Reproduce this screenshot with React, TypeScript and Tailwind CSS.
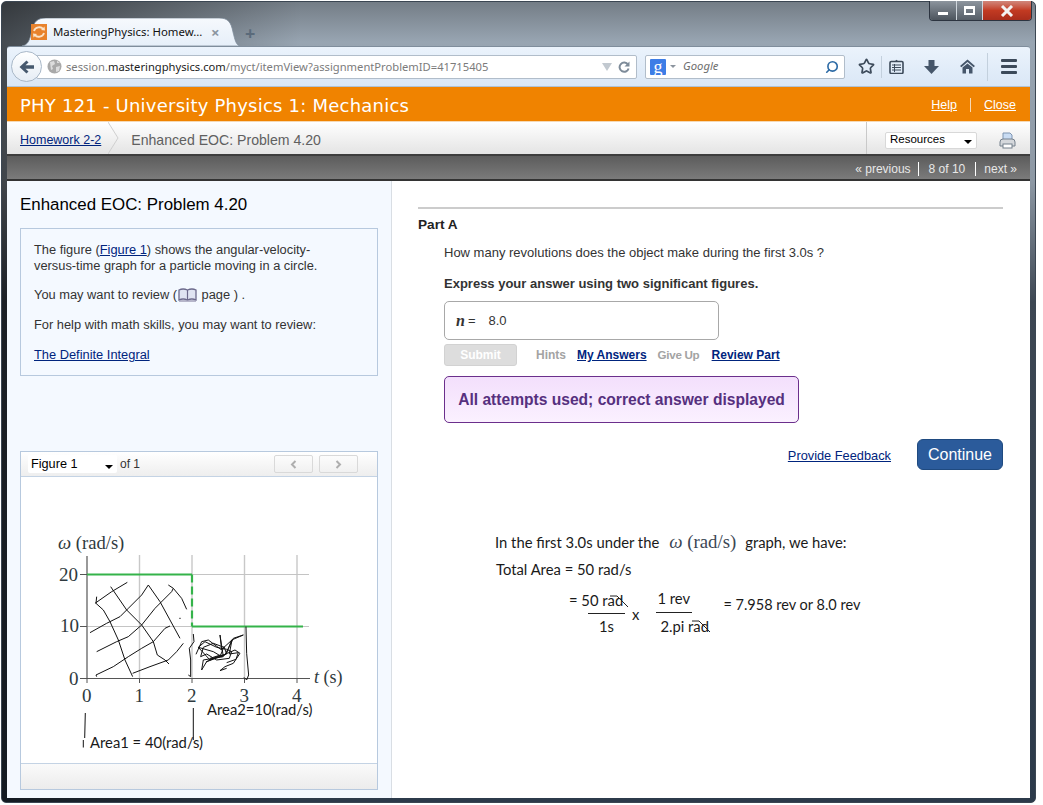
import { Star, Search } from "lucide-react";

const arial = "font-['Liberation_Sans',Arial,sans-serif]";

function TabShape() {
  return (
    <svg className="absolute inset-0" width="218" height="28" viewBox="0 0 218 28">
      <defs>
        <linearGradient id="tabfill" x1="0" y1="0" x2="0" y2="1">
          <stop offset="0" stopColor="#f6f9fd" />
          <stop offset="1" stopColor="#e6eff9" />
        </linearGradient>
      </defs>
      <path
        d="M0 28 C6 27 8 22 10 12 C12 4 15 0 24 0 L197 0 C206 0 209 4 211 14 C213 22 214 27 218 28 Z"
        fill="url(#tabfill)"
        stroke="#7f8d9c"
        strokeWidth="0.8"
      />
    </svg>
  );
}

function Favicon() {
  return (
    <svg width="16" height="16" viewBox="0 0 16 16">
      <rect width="16" height="16" fill="#e8822c" />
      <path d="M3 7 C4 3 10 2 12 5" fill="none" stroke="#fbe3c8" strokeWidth="1.8" />
      <path d="M13 9 C12 13 6 14 4 11" fill="none" stroke="#fbe3c8" strokeWidth="1.8" />
      <path d="M10 6 L14 6.5 L13.5 2.5 Z M6 10 L2 9.5 L2.5 13.5 Z" fill="#fbe3c8" />
    </svg>
  );
}

function WindowControls() {
  return (
    <div className="flex h-[20px] w-[103px] overflow-hidden rounded-b-[4px] border border-t-0 border-[#2c3440]">
      <div className="flex w-[27px] items-center justify-center border-r border-[#cfd6dd] bg-gradient-to-b from-[#8d959e] to-[#4d555e]">
        <div className="mt-[5px] h-[3px] w-[10px] bg-white" />
      </div>
      <div className="flex w-[26px] items-center justify-center border-r border-[#cfd6dd] bg-gradient-to-b from-[#8d959e] to-[#565e67]">
        <div className="h-[9px] w-[11px] border-2 border-t-[3px] border-white" />
      </div>
      <div className="flex flex-1 items-center justify-center bg-gradient-to-b from-[#d0867a] via-[#c23a22] to-[#a92d1c]">
        <svg width="14" height="12" viewBox="0 0 14 12">
          <path d="M2 1 L12 11 M12 1 L2 11" stroke="#f3f3f3" strokeWidth="3" />
        </svg>
      </div>
    </div>
  );
}

function BackButton() {
  return (
    <div className="relative z-10 flex h-[31px] w-[31px] shrink-0 items-center justify-center rounded-full border border-[#a9b8c8] bg-gradient-to-b from-white to-[#e6edf5]">
      <svg width="16" height="14" viewBox="0 0 16 14">
        <path d="M7.5 0.5 L0.5 7 L7.5 13.5 L9.5 11.5 L6.5 8.8 L15 8.8 L15 5.2 L6.5 5.2 L9.5 2.5 Z" fill="#47596e" />
      </svg>
    </div>
  );
}

function Globe() {
  return (
    <svg width="15" height="15" viewBox="0 0 15 15">
      <circle cx="7.5" cy="7.5" r="7" fill="#a9a9a9" />
      <path d="M3 3 L7 2 L8 5 L5 7 L6 10 L4 11 Z M9 8 L13 7 L12 12 L9 13 Z M10 1.5 L13 4 L10 4 Z" fill="#dcdcdc" />
    </svg>
  );
}

function ReloadIcon() {
  return (
    <svg width="12" height="12" viewBox="0 0 12 12">
      <path d="M10 3.6 A4.6 4.6 0 1 0 10.6 7.5" fill="none" stroke="#7d8b99" strokeWidth="2" />
      <path d="M11.5 0.5 L11.5 5.5 L6.5 5.5 Z" fill="#7d8b99" />
    </svg>
  );
}

function Clipboard() {
  return (
    <svg width="15" height="15" viewBox="0 0 15 15">
      <rect x="1" y="2.5" width="13" height="12" rx="1.2" fill="none" stroke="#3c4a5a" strokeWidth="1.6" />
      <path d="M5 3 L7.5 0.8 L10 3 Z" fill="#3c4a5a" />
      <path d="M3 6 H12 M3 8.5 H12 M3 11 H12" stroke="#3c4a5a" strokeWidth="1.2" />
      <path d="M5.5 5 V13" stroke="#3c4a5a" strokeWidth="1" />
    </svg>
  );
}

function DownloadArrow() {
  return (
    <svg width="15" height="14" viewBox="0 0 15 14">
      <path d="M4.5 0 H10.5 V6 H15 L7.5 14 L0 6 H4.5 Z" fill="#46566a" />
    </svg>
  );
}

function HomeIcon() {
  return (
    <svg width="15" height="15" viewBox="0 0 15 15">
      <path d="M7.5 0.5 L15 7 L13.6 8.2 L7.5 3 L1.4 8.2 L0 7 Z" fill="#46566a" />
      <path d="M7.5 4.4 L12.5 8.6 V14.5 H9 V10 H6 V14.5 H2.5 V8.6 Z" fill="#46566a" />
    </svg>
  );
}

function Hamburger() {
  return (
    <div className="flex w-[16px] flex-col gap-[3px]">
      <div className="h-[3px] rounded-[1px] bg-[#3c4a5a]" />
      <div className="h-[3px] rounded-[1px] bg-[#3c4a5a]" />
      <div className="h-[3px] rounded-[1px] bg-[#3c4a5a]" />
    </div>
  );
}

function Toolbar() {
  return (
    <div className="flex h-[40px] items-center rounded-t-[3px] border-t border-[#7f8d9c] bg-gradient-to-b from-[#ebf3fc] to-[#dae7f6] pl-[4px]">
      <BackButton />
      <div className="-ml-[6px] flex h-[24px] w-[601px] items-center rounded-[2px] border border-[#b1bdca] bg-white pl-[10px] pr-[6px]">
        <Globe />
        <span className="ml-[4px] font-['Noto_Sans',sans-serif] text-[11.2px] leading-none text-[#7b7b7b]">
          session.<span className="text-[#1c1c1c]">masteringphysics.com</span>/myct/itemView?assignmentProblemID=41715405
        </span>
        <div className="ml-auto flex items-center gap-[6px]">
          <div className="h-0 w-0 border-x-[5px] border-t-[8px] border-x-transparent border-t-[#c2c9d0]" />
          <ReloadIcon />
        </div>
      </div>
      <div className="ml-[8px] flex h-[24px] w-[200px] items-center rounded-[2px] border border-[#b1bdca] bg-white pl-[4px] pr-[5px]">
        <div className="flex h-[16px] w-[16px] items-center justify-center rounded-[1px] bg-[#3d7de6] font-['Liberation_Serif',serif] text-[18px] leading-none text-white">
          g
        </div>
        <div className="ml-[4px] h-0 w-0 border-x-[3px] border-t-[3px] border-x-transparent border-t-[#8b949e]" />
        <span className="ml-[7px] font-['Noto_Sans',sans-serif] text-[11.3px] italic text-[#6e6e6e]">Google</span>
        <Search className="ml-auto -scale-x-100 text-[#2c6aa5]" size={14} strokeWidth={2.8} />
      </div>
      <Star className="ml-[13px] text-[#3c4a5a]" size={17} strokeWidth={2.4} />
      <div className="ml-[6px] h-[22px] w-px bg-[#c3d0dd]" />
      <div className="ml-[7px]">
        <Clipboard />
      </div>
      <div className="ml-[20px]">
        <DownloadArrow />
      </div>
      <div className="ml-[21px]">
        <HomeIcon />
      </div>
      <div className="ml-[12px] h-[28px] w-px bg-[#c3d0dd]" />
      <div className="ml-[13px]">
        <Hamburger />
      </div>
    </div>
  );
}

function Printer() {
  return (
    <svg width="17" height="17" viewBox="0 0 17 17">
      <path d="M4 1 H11 L13 3 V9 H4 Z" fill="#c9dcf3" stroke="#7e95b2" />
      <path d="M1 10 Q1 7 4 7 H13 Q16 7 16 10 V14 H1 Z" fill="#d5d8dc" stroke="#75808c" />
      <rect x="4" y="12" width="9" height="4" fill="#fff" stroke="#75808c" />
    </svg>
  );
}

function Crumbs() {
  return (
    <div className={`flex h-[33px] items-stretch border-t border-[#f6d9b5] bg-gradient-to-b from-white to-[#e4e4e4] ${arial}`}>
      <div className="flex items-center pl-[13px] pt-[5px]">
        <a className="text-[12.5px] text-[#00247d] underline">Homework 2-2</a>
      </div>
      <svg className="ml-[7px]" width="12" height="32" viewBox="0 0 12 32">
        <path d="M0 0 L10 16 L0 32" fill="none" stroke="#cfcfcf" />
      </svg>
      <div className="ml-[11px] flex flex-1 items-center pt-[5px] text-[14.1px] text-[#606060]">Enhanced EOC: Problem 4.20</div>
      <div className="flex w-[164px] items-center border-l border-[#c9c9c9] pl-[18px] pt-[4px]">
        <div className="flex h-[17px] w-[92px] items-center rounded-[2px] border border-[#d8d8d8] bg-white pl-[4px] pr-[4px] text-[11.5px] text-black">
          Resources
          <div className="ml-auto mt-[4px] h-0 w-0 border-x-[4px] border-t-[4px] border-x-transparent border-t-black" />
        </div>
        <div className="ml-[22px]">
          <Printer />
        </div>
      </div>
    </div>
  );
}

function PagerBar() {
  return (
    <div
      className={`flex h-[27px] items-center justify-end border-y-2 border-t-[#3d3d3d] border-b-[#333333] bg-gradient-to-b from-[#5c5c5c] to-[#7b7b7b] pr-[13px] pt-[2px] text-[12px] text-[#e8e8e8] ${arial}`}
    >
      <span>« previous</span>
      <div className="ml-[7px] mr-[10px] h-[14px] w-px bg-white" />
      <span>8 of 10</span>
      <div className="ml-[10px] mr-[8px] h-[14px] w-px bg-white" />
      <span>next »</span>
    </div>
  );
}

function BookIcon() {
  return (
    <svg className="mx-[1px] inline-block align-[-3px]" width="19" height="14" viewBox="0 0 19 14">
      <path d="M1 2 Q5 0 9.5 2 Q14 0 18 2 V12 Q14 10 9.5 12 Q5 10 1 12 Z" fill="#dfe4f2" stroke="#6c6a8c" strokeWidth="1.3" />
      <path d="M9.5 2 V12" stroke="#6c6a8c" strokeWidth="1.2" />
      <path d="M1 13 H18" stroke="#8b88a6" strokeWidth="1.2" />
    </svg>
  );
}

function ProblemBox() {
  return (
    <div className="mt-[14px] h-[148px] border border-[#b7c9de] px-[13px] pt-[13px] text-[12.85px] leading-[16px] text-[#333333]">
      <p>
        The figure (<a className="text-[#00247d] underline">Figure 1</a>) shows the angular-velocity-
        <br />
        versus-time graph for a particle moving in a circle.
      </p>
      <p className="mt-[13px]">
        You may want to review (<BookIcon /> page ) .
      </p>
      <p className="mt-[14px]">For help with math skills, you may want to review:</p>
      <p className="mt-[14px]">
        <a className="text-[#00247d] underline">The Definite Integral</a>
      </p>
    </div>
  );
}

// hand drawn marks, traced at 3x and scaled down
const scribbles = [
  "M75 130 L125 95 L172 67",
  "M122 80 L170 150 L215 195 L250 245 L262 285 L285 300 L297 312",
  "M80 110 L78 130 L100 150 L120 185 L145 240 L165 300 L188 350",
  "M60 218 L110 190 L150 170 L175 145 L215 105 L235 75",
  "M235 75 L270 125 L300 180 L330 235",
  "M80 275 L140 245 L175 230 L215 195 L255 145 L305 95 L310 85 L295 75",
  "M310 85 L335 115 L350 148",
  "M80 350 L78 345 L130 320 L175 290 L215 265 L250 245 L285 205 L300 198",
  "M188 340 L240 320 L295 300 L320 275 L340 250",
  "M370 222 L372 245 L358 265 L362 300 L362 350 L355 345",
  "M528 200 L530 280 L536 345 L530 360 L522 352",
  "M378 283 L395 245 L415 240 L455 270 L450 225 L460 290 L400 300 L395 330 L410 305 L465 285 L490 235 L520 225 L485 240 L470 280 L455 290 L430 275 L385 262 L420 300 L460 285 L495 270 L510 280 L490 310 L465 320 L450 332 L470 325",
  "M385 262 L405 245 L440 262 L470 268 L485 275 L478 295 L440 300 L410 282 L392 290 L400 262 L430 250 L462 262 L486 240 L478 282 L505 278 L498 298 L470 308",
  "M408 306 L440 290 L470 282 L462 260 L452 285 L420 295",
];

function Graph() {
  const serif = "'Liberation Serif', serif";
  const xs = [87, 139.5, 192, 244.5, 297];
  return (
    <svg className="block" width="356" height="286" viewBox="21 477 356 286">
      {/* grid */}
      {xs.slice(1).map((x) => (
        <line key={x} x1={x} y1="555" x2={x} y2="678" stroke="#c8c8c8" strokeWidth="1.4" />
      ))}
      <line x1="87" y1="574.5" x2="309" y2="574.5" stroke="#c4c4c4" />
      <line x1="87" y1="626.5" x2="309" y2="626.5" stroke="#c4c4c4" />
      {/* axes */}
      <line x1="87" y1="556" x2="87" y2="679" stroke="#808080" strokeWidth="1.6" />
      <line x1="80" y1="678.5" x2="310" y2="678.5" stroke="#555555" strokeWidth="1.2" />
      <line x1="80" y1="574.5" x2="87" y2="574.5" stroke="#555555" />
      <line x1="80" y1="626.5" x2="87" y2="626.5" stroke="#555555" />
      {xs.map((x) => (
        <line key={x} x1={x} y1="678" x2={x} y2="683" stroke="#555555" />
      ))}
      {/* data */}
      <path d="M87 574.5 H192" stroke="#35b34a" strokeWidth="2" fill="none" />
      <path d="M192 574.5 V626.5" stroke="#35b34a" strokeWidth="2.2" strokeDasharray="8 4" fill="none" />
      <path d="M192 626.5 H303" stroke="#35b34a" strokeWidth="2" fill="none" />
      {/* labels */}
      <g fontFamily={serif} fontSize="19" fill="#2f3a40">
        <text x="58" y="549" fontSize="18.6">
          <tspan fontStyle="italic">ω</tspan> (rad/s)
        </text>
        <text x="59" y="581">20</text>
        <text x="60" y="632">10</text>
        <text x="69" y="685">0</text>
        <text x="82" y="702">0</text>
        <text x="134.5" y="702">1</text>
        <text x="187" y="702">2</text>
        <text x="239.5" y="702">3</text>
        <text x="292" y="702">4</text>
        <text x="314" y="683" fontSize="18">
          <tspan fontStyle="italic">t</tspan> (s)
        </text>
      </g>
      <g fontFamily="Lato, sans-serif" fontSize="14.8" fill="#1a1a1a">
        <text x="207" y="715">Area2=10(rad/s)</text>
        <text x="90" y="748">Area1 = 40(rad/s)</text>
      </g>
      {/* scribbles */}
      <g transform="translate(70 560) scale(0.3333)" fill="none" stroke="#111111" strokeWidth="3" strokeLinejoin="round">
        {scribbles.map((d) => (
          <path key={d} d={d} />
        ))}
        <path d="M328 175 h4" />
      </g>
      <path d="M85.3 713 L84.7 738 M83.3 740 V747.5 M193.3 708 V740" stroke="#111111" fill="none" />
    </svg>
  );
}

function FigurePanel() {
  return (
    <div className="mt-[75px] h-[339px] border border-[#b7c9de] bg-white text-[12.7px]">
      <div className="flex h-[25px] items-center border-b border-[#c4d3e4] bg-gradient-to-b from-white to-[#eeeeee] pl-[7px] pr-[19px] text-[#333333]">
        <div className="flex h-[18px] w-[89px] shrink-0 items-center rounded-[2px] bg-white pl-[3px] pr-[4px] pt-[1px] text-black">
          Figure 1
          <div className="ml-auto mt-[4px] h-0 w-0 border-x-[4px] border-t-[4px] border-x-transparent border-t-black" />
        </div>
        <span className="ml-[3px] whitespace-nowrap text-[12px]">of 1</span>
        <div className="ml-auto flex h-[18px] w-[39px] items-center justify-center rounded-[2px] border border-[#d9d9d9] text-[#aeaeae]">
          <svg width="7" height="9" viewBox="0 0 7 9">
            <path d="M5.5 1 L2 4.5 L5.5 8" fill="none" stroke="#aeaeae" strokeWidth="2" />
          </svg>
        </div>
        <div className="ml-[6px] flex h-[18px] w-[39px] items-center justify-center rounded-[2px] border border-[#d9d9d9]">
          <svg width="7" height="9" viewBox="0 0 7 9">
            <path d="M1.5 1 L5 4.5 L1.5 8" fill="none" stroke="#aeaeae" strokeWidth="2" />
          </svg>
        </div>
      </div>
      <Graph />
      <div className="h-[26px] border-t border-[#c4d3e4] bg-gradient-to-b from-[#fafafa] to-[#ececec]" />
    </div>
  );
}

function LeftPanel() {
  return (
    <div className="w-[385px] shrink-0 border-r border-[#d9dee4] bg-[#f4f9ff] px-[13px] pt-[15px]">
      <h1 className="text-[16.9px] leading-[18px] text-black">Enhanced EOC: Problem 4.20</h1>
      <ProblemBox />
      <FigurePanel />
    </div>
  );
}

function Question() {
  return (
    <div className="ml-[26px]">
      <p className="mt-[12px] text-[13px] leading-[16px] text-[#333333]">
        How many revolutions does the object make during the first 3.0s ?
      </p>
      <p className="mt-[15px] text-[13px] font-bold leading-[16px] text-[#333333]">
        Express your answer using two significant figures.
      </p>
      <div className="mt-[9px] flex h-[39px] w-[275px] items-center rounded-[5px] border border-[#a8a8a8] pl-[11px] text-[13px] text-[#333333]">
        <span className="font-['Liberation_Serif',serif] text-[16px] font-bold italic">n</span>
        <span className="ml-[3px]">=</span>
        <span className="ml-[13px]">8.0</span>
      </div>
      <div className="mt-[4px] flex h-[22px] items-center text-[12px] font-bold">
        <div className="flex h-[22px] w-[73px] items-center justify-center rounded-[3px] border border-[#d2d2d2] bg-[#dddddd] text-white">
          Submit
        </div>
        <span className="ml-[19px] text-[#a3a3a3]">Hints</span>
        <a className="ml-[11px] text-[#00247d] underline">My Answers</a>
        <span className="ml-[11px] w-[42px] whitespace-nowrap text-[11.6px] tracking-[-0.3px] text-[#a3a3a3]">Give Up</span>
        <a className="ml-[12px] text-[#00247d] underline">Review Part</a>
      </div>
      <div className="mt-[10px] flex h-[47px] w-[355px] items-center justify-center rounded-[5px] border border-[#6b2f8c] bg-gradient-to-b from-[#f3dffc] to-[#fbf1ff] text-[15.6px] font-bold text-[#56307e]">
        All attempts used; correct answer displayed
      </div>
    </div>
  );
}

function Strike({ className }: { className: string }) {
  return (
    <svg className={`absolute ${className}`} width="20" height="14" viewBox="0 0 20 14">
      <path d="M1 2 L8 2 L12 6 L19 13" fill="none" stroke="#222222" />
    </svg>
  );
}

function Working() {
  return (
    <div className="ml-[77px] font-['Lato',sans-serif] text-[14.8px] leading-[20px] text-[#1a1a1a]">
      <div className="mt-[62px] flex items-center whitespace-nowrap">
        <span>In the first 3.0s under the</span>
        <span className="ml-[10px] mr-[9px] font-['Liberation_Serif',serif] text-[18.8px] text-[#3b4654]">
          <i>ω</i> (rad/s)
        </span>
        <span>graph, we have:</span>
      </div>
      <div className="ml-[1px] mt-[7px]">Total Area = 50 rad/s</div>
      <div className="mt-[11px] flex">
        <div className="ml-[74px] w-[57px]">
          <div className="relative h-[20px] whitespace-nowrap">
            = 50 rad
            <Strike className="left-[40px] top-[4px]" />
          </div>
          <div className="ml-[19px] mt-[3px] h-px w-[37px] bg-[#222222]" />
          <div className="ml-[30px] mt-[2px]">1s</div>
        </div>
        <div className="ml-[6px] mt-[14px]">x</div>
        <div className="ml-[17px] w-[60px]">
          <div className="ml-[1px] h-[20px] -translate-y-[2px]">1 rev</div>
          <div className="mt-[2px] h-px w-[36px] bg-[#222222]" />
          <div className="relative ml-[4px] mt-[3px] h-[20px] whitespace-nowrap">
            2.pi rad
            <Strike className="left-[31px] top-[3px]" />
          </div>
        </div>
        <div className="ml-[7px] mt-[5px] whitespace-nowrap text-[14.5px]">= 7.958 rev or 8.0 rev</div>
      </div>
    </div>
  );
}

function RightPanel() {
  return (
    <div className="flex-1 bg-white pl-[26px] pr-[27px] pt-[26px]">
      <div className="h-[2px] bg-[#cccccc]" />
      <h2 className="mt-[8px] text-[13.6px] font-bold leading-[16px] text-[#222222]">Part A</h2>
      <Question />
      <div className="mt-[16px] flex h-[31px] items-center justify-end">
        <a className="mt-[2px] text-[12.8px] text-[#00247d] underline">Provide Feedback</a>
        <button className="ml-[26px] h-[31px] w-[86px] rounded-[6px] border border-[#1f4a80] bg-[#2b5b9b] text-[16px] text-white">
          Continue
        </button>
      </div>
      <Working />
    </div>
  );
}

export default function App() {
  return (
    <div className="h-[805px] w-[1043px] overflow-hidden bg-white">
      <div className="ml-px mt-px h-[802px] w-[1035px] rounded-[5px] border border-[#3b4652] bg-[linear-gradient(90deg,rgba(0,0,0,0.55)_0px,rgba(0,0,0,0)_300px),linear-gradient(180deg,#747d86_0px,#98a5b2_40px,#8d98a4_180px,#3d4753_300px,#2c3a4a_800px)] px-[5px]">
        <div className="flex h-[44px] items-start justify-between">
          <div className="ml-[15px] mt-[16px] flex items-start">
            <div className="relative flex h-[28px] w-[218px] items-center pl-[9px] font-['Noto_Sans',sans-serif] text-[11.4px] text-[#111111]">
              <TabShape />
              <div className="relative">
                <Favicon />
              </div>
              <span className="relative ml-[6px] w-[148px] whitespace-nowrap">MasteringPhysics: Homew...</span>
              <span className="relative ml-[10px] text-[15px] font-bold leading-none text-[#8b95a0]">×</span>
            </div>
            <span className="ml-[5px] mt-[1px] text-[18px] font-bold leading-[28px] text-[#5a6a7a]">+</span>
          </div>
          <div className="-mr-[2px] -mt-px">
            <WindowControls />
          </div>
        </div>
        <Toolbar />
        <div className={arial}>
          <div className="flex h-[35px] items-center justify-between border-t border-[#b0c3d6] bg-[#f08300] pl-[13px] pr-[14px] pt-[2px] text-white">
            <span className="font-['DejaVu_Sans',sans-serif] text-[18px] tracking-[0.22px]">PHY 121 - University Physics 1: Mechanics</span>
            <div className="flex items-center text-[12.5px]">
              <a className="underline">Help</a>
              <div className="mx-[13px] h-[14px] w-px bg-[#f6d9b5]" />
              <a className="underline">Close</a>
            </div>
          </div>
          <Crumbs />
          <PagerBar />
          <div className="flex h-[617px]">
            <LeftPanel />
            <RightPanel />
          </div>
        </div>
      </div>
    </div>
  );
}
